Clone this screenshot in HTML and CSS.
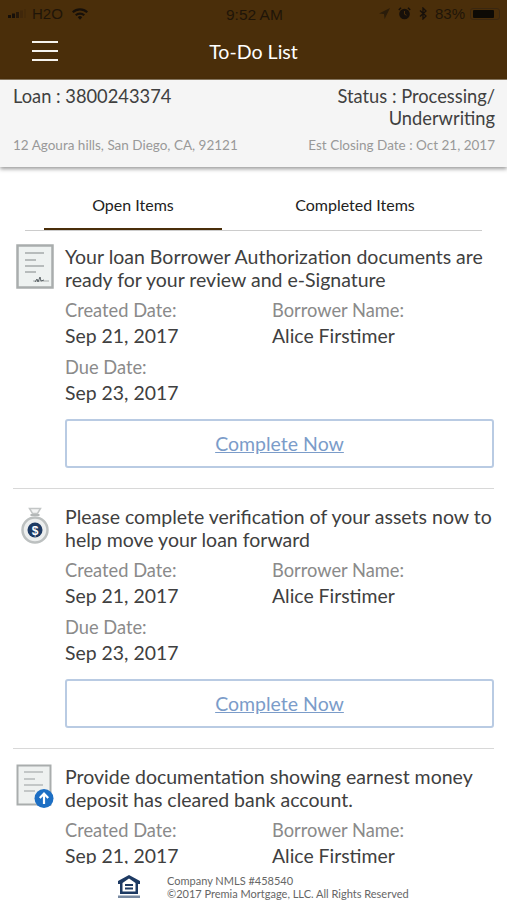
FILE: index.html
```html
<!DOCTYPE html>
<html lang="en">
<head>
  <meta charset="UTF-8">
  <meta name="viewport" content="width=device-width, initial-scale=1.0">
  <title>To-Do List</title>
  <link rel="stylesheet" href="styles.css">
</head>
<body>
  <div class="app">
    <header class="top-bar">
      <div class="status-bar">
        <div class="status-left">
          <svg class="signal" width="18" height="9" viewBox="0 0 18 9">
            <rect x="0" y="6" width="3" height="3" fill="#17100a"/>
            <rect x="4" y="4.5" width="3" height="4.5" fill="#17100a"/>
            <rect x="8" y="3" width="3" height="6" fill="#17100a" opacity=".7"/>
            <rect x="12" y="1.500" width="3" height="7.5" fill="#17100a" opacity=".2"/>
            <rect x="16" y="0" width="2" height="9" fill="#17100a" opacity=".12"/>
          </svg>
          <span>H2O</span>
          <svg class="wifi" width="18" height="13" viewBox="0 0 18 13">
            <path d="M1 4.500a11.500 11.500 0 0 1 16 0l-1.500 1.600a9.300 9.300 0 0 0-13 0z" fill="#17100a"/>
            <path d="M4 7.500a7.200 7.200 0 0 1 10 0l-1.500 1.600a5 5 0 0 0-7 0z" fill="#17100a"/>
            <path d="M6.800 10.300a3 3 0 0 1 4.400 0L9 12.800z" fill="#17100a"/>
          </svg>
        </div>
        <span class="status-time">9:52 AM</span>
        <div class="status-right">
          <svg width="11" height="11" viewBox="0 0 11 11"><path d="M11 0 0 5.500l5 .6.600 4.900z" fill="#2a1c0a"/></svg>
          <svg width="13" height="13" viewBox="0 0 13 13">
            <circle cx="6.500" cy="7" r="5.300" fill="#17100a"/>
            <path d="M6.500 4v3.200l2 1" stroke="#4a2e0a" stroke-width="1" fill="none"/>
            <path d="M.8 3 3 .8M12.200 3 10 .8" stroke="#17100a" stroke-width="1.500"/>
          </svg>
          <svg width="8" height="13" viewBox="0 0 8 13"><path d="M1 3.500 7 9 4 12V1l3 3-6 5.500" stroke="#17100a" stroke-width="1.300" fill="none"/></svg>
          <span class="battery-pct">83%</span>
          <div class="battery"><div class="battery-level"></div></div>
        </div>
      </div>
      <div class="nav-bar">
        <div class="menu-btn"><span></span><span></span><span></span></div>
        <h1>To-Do List</h1>
      </div>
    </header>

    <section class="loan-info">
      <div class="loan-row">
        <div class="loan-num">Loan : 3800243374</div>
        <div class="loan-status">Status : Processing/<br>Underwriting</div>
      </div>
      <div class="loan-row loan-sub">
        <div>12 Agoura hills, San Diego, CA, 92121</div>
        <div>Est Closing Date : Oct 21, 2017</div>
      </div>
    </section>

    <nav class="tabs">
      <div class="tab active">Open Items</div>
      <div class="tab">Completed Items</div>
    </nav>

    <main class="items">
      <article class="item">
        <div class="item-icon">
          <svg width="38" height="45" viewBox="0 0 38 45">
            <rect x="1.500" y="1.500" width="35" height="42" fill="#eef2f1" stroke="#a9adad" stroke-width="2.500"/>
            <path d="M9 9h19M9 16h11M9 22h19M9 28h11" stroke="#a5aaaa" stroke-width="1.500"/>
            <path d="M17 37h16" stroke="#a5aaaa" stroke-width="1"/>
            <path d="M19 38l2-3 1 3 2-5 1 4 3-1" stroke="#5c6468" stroke-width="1" fill="none"/>
          </svg>
        </div>
        <div class="item-body">
          <p class="item-title">Your loan Borrower Authorization documents are ready for your review and e-Signature</p>
          <div class="meta">
            <div><div class="meta-label">Created Date:</div><div class="meta-value">Sep 21, 2017</div></div>
            <div><div class="meta-label">Borrower Name:</div><div class="meta-value">Alice Firstimer</div></div>
            <div><div class="meta-label">Due Date:</div><div class="meta-value">Sep 23, 2017</div></div>
          </div>
          <a class="complete-btn" href="#">Complete Now</a>
        </div>
      </article>

      <article class="item">
        <div class="item-icon icon-bag">
          <svg width="30" height="40" viewBox="0 0 30 40">
            <path d="M9.500 1.500h11l-3 5h-5z" fill="#f4f5f5" stroke="#c3c6c6" stroke-width="1.500"/>
            <path d="M10.500 8h9" stroke="#b4b8b8" stroke-width="2"/>
            <circle cx="15" cy="23" r="12.500" fill="#eceeee" stroke="#bcc0c0" stroke-width="2.500"/>
            <circle cx="15" cy="23" r="7.500" fill="#1d3a63"/>
            <text x="15" y="27.500" class="dollar" text-anchor="middle">$</text>
          </svg>
        </div>
        <div class="item-body">
          <p class="item-title">Please complete verification of your assets now to help move your loan forward</p>
          <div class="meta">
            <div><div class="meta-label">Created Date:</div><div class="meta-value">Sep 21, 2017</div></div>
            <div><div class="meta-label">Borrower Name:</div><div class="meta-value">Alice Firstimer</div></div>
            <div><div class="meta-label">Due Date:</div><div class="meta-value">Sep 23, 2017</div></div>
          </div>
          <a class="complete-btn" href="#">Complete Now</a>
        </div>
      </article>

      <article class="item">
        <div class="item-icon">
          <svg width="40" height="45" viewBox="0 0 40 45">
            <rect x="1.500" y="1.500" width="33" height="39" fill="#eef1f0" stroke="#a9adad" stroke-width="2"/>
            <path d="M8 8h19M8 15h11M8 21h19M8 27h11" stroke="#b5b9b9" stroke-width="1.500"/>
            <circle cx="28" cy="34.500" r="9.500" fill="#1d6fc4"/>
            <path d="M28 40V29.500M23.800 34 28 29.500l4.200 4.500" stroke="#fff" stroke-width="2.200" fill="none"/>
          </svg>
        </div>
        <div class="item-body">
          <p class="item-title">Provide documentation showing earnest money deposit has cleared bank account.</p>
          <div class="meta">
            <div><div class="meta-label">Created Date:</div><div class="meta-value">Sep 21, 2017</div></div>
            <div><div class="meta-label">Borrower Name:</div><div class="meta-value">Alice Firstimer</div></div>
          </div>
        </div>
      </article>
    </main>

    <footer class="footer">
      <svg class="eh-logo" width="24" height="25" viewBox="0 0 24 25">
        <path d="M12 1 1 7v3h2v10h18V10h2V7zM5.500 9 12 4.500 18.500 9v8.500h-13z" fill="#1d3a63" fill-rule="evenodd"/>
        <path d="M8 10h8v2H8zM8 13.500h8v2H8z" fill="#1d3a63"/>
        <rect x="1" y="21.500" width="22" height="2.500" fill="#1d3a63" opacity=".6"/>
      </svg>
      <div class="footer-text">
        <div>Company NMLS #458540</div>
        <div>©2017 Premia Mortgage, LLC. All Rights Reserved</div>
      </div>
    </footer>
  </div>
</body>
</html>
```

FILE: styles.css
```css
* {
  box-sizing: border-box;
}
body {
  margin: 0;
  font-family: Lato, "Open Sans", sans-serif;
  color: #333;
  background: #fff;
}
.app {
  height: 900px;
  display: flex;
  flex-direction: column;
  overflow: hidden;
}
.top-bar {
  height: 80px;
  flex: none;
  background: #4a2e0a;
  border-bottom: 1px solid #8a7a62;
}
.status-bar {
  height: 27px;
  padding: 0 7px 0 8px;
  display: flex;
  align-items: center;
  justify-content: space-between;
  font-family: "Liberation Sans", sans-serif;
  font-size: 15px;
  color: #1f1508;
  position: relative;
}
.status-left,
.status-right {
  display: flex;
  align-items: center;
  gap: 6px;
}
.status-right {
  gap: 8px;
}
.wifi {
  margin-left: 2px;
}
.status-time {
  position: absolute;
  left: 226px;
  top: 6px;
  font-size: 15.5px;
}
.battery-pct {
  margin-right: -3px;
}
.battery {
  width: 30px;
  height: 12px;
  padding: 1px 2px;
  border: 1px solid #3a2710;
  border-radius: 3px;
}
.battery-level {
  width: 21px;
  height: 8px;
  background: #0d0a05;
  border-radius: 1px;
}
.nav-bar {
  height: 52px;
  padding-left: 32px;
  display: flex;
  align-items: center;
  position: relative;
}
.menu-btn {
  width: 26px;
  display: flex;
  flex-direction: column;
  gap: 6.5px;
  margin-top: -4px;
}
.menu-btn span {
  height: 2.5px;
  background: #f6f3ee;
}
.nav-bar h1 {
  position: absolute;
  left: 0;
  right: 0;
  top: 12px;
  margin: 0;
  text-align: center;
  font-size: 19.6px;
  line-height: 26px;
  font-weight: 400;
  color: #fff;
}
.loan-info {
  height: 87px;
  flex: none;
  padding: 5px 12px 0 13px;
  background: #f5f5f5;
  box-shadow: 0 2px 4px rgba(0, 0, 0, 0.4);
  position: relative;
}
.loan-row {
  display: flex;
  justify-content: space-between;
}
.loan-num,
.loan-status {
  font-size: 18.3px;
  line-height: 22px;
  color: #404040;
}
.loan-status {
  text-align: right;
}
.loan-sub {
  margin-top: 7px;
  font-size: 13.5px;
  line-height: 18px;
  color: #999;
}
.tabs {
  flex: none;
  height: 64px;
  margin: 0 25px;
  padding-top: 28px;
  display: flex;
  border-bottom: 1px solid #ccc;
}
.tab {
  font-size: 16px;
  line-height: 20px;
  color: #222;
  text-align: center;
  width: 178px;
  margin-left: 19px;
  height: 35px;
}
.tab:last-child {
  margin-left: 44px;
}
.tab.active {
  border-bottom: 2px solid #4a2e0a;
}
.items {
  flex: 1;
  min-height: 0;
  overflow: hidden;
  padding: 0 13px;
}
.item {
  display: flex;
  padding: 16px 0 20px;
  border-bottom: 1px solid #d8d8d8;
}
.item:first-child {
  padding-top: 14px;
}
.item:last-child {
  border-bottom: none;
}
.item-icon {
  width: 52px;
  flex: none;
  padding-left: 3px;
  margin-top: -1px;
}
.icon-bag {
  padding: 3px 0 0 7px;
}
.item-body {
  flex: 1;
}
.item-title {
  margin: 0;
  font-size: 19.5px;
  line-height: 23px;
  color: #404040;
}
.meta {
  margin-top: 8px;
  display: grid;
  grid-template-columns: 207px 1fr;
}
.meta-label {
  font-size: 18.3px;
  line-height: 22px;
  color: #8a8a8a;
}
.meta-value {
  font-size: 19.4px;
  line-height: 30px;
  margin-bottom: 5px;
  color: #404040;
}
.complete-btn {
  display: block;
  height: 49px;
  margin-top: 6px;
  border: 2px solid #b9cbe3;
  border-radius: 3px;
  text-align: center;
  font-size: 19.5px;
  line-height: 45px;
  color: #7b9cc9;
}
.footer {
  height: 36px;
  flex: none;
  display: flex;
  padding: 10px 0 0 117px;
  background: #fff;
}
.eh-logo {
  flex: none;
}
.footer-text {
  margin-left: 26px;
  font-size: 11px;
  line-height: 13px;
  color: #666;
}
.dollar {
  font-family: "Liberation Sans", sans-serif;
  font-size: 12px;
  font-weight: 700;
  fill: #fff;
}
```
